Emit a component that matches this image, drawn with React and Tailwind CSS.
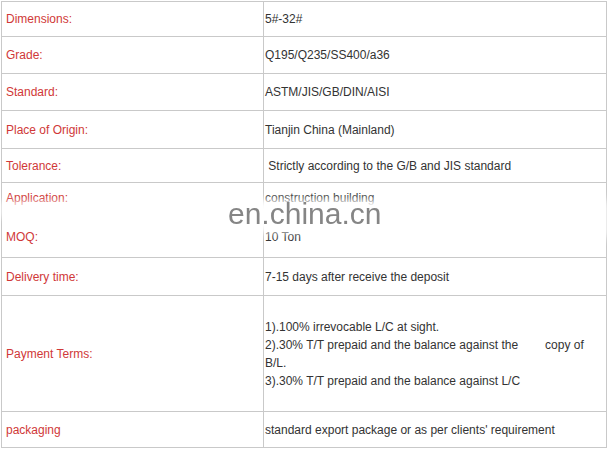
import React from 'react';

const rows = [
  { label: 'Dimensions:', value: '5#-32#', h: 'h-[35px]' },
  { label: 'Grade:', value: 'Q195/Q235/SS400/a36', h: 'h-[37px]' },
  { label: 'Standard:', value: 'ASTM/JIS/GB/DIN/AISI', h: 'h-[37px]' },
  { label: 'Place of Origin:', value: 'Tianjin China (Mainland)', h: 'h-[38px]' },
  { label: 'Tolerance:', value: '\u00a0Strictly according to the G/B and JIS standard', h: 'h-[34px]' },
];

function Row({ label, value, h, last }) {
  return (
    <div className={`grid grid-cols-[262px_1fr] ${h} ${last ? '' : 'border-b border-[#c9c9c9]'}`}>
      <div className="flex items-center border-r border-[#c9c9c9] pl-[4px] text-[#d03838]">{label}</div>
      <div className="flex items-center pl-[1px] text-[#333]">{value}</div>
    </div>
  );
}

export default function App() {
  return (
    <div
      className="relative w-[612px] h-[454px] bg-white pl-px pt-px text-[12px] leading-[18px]"
      style={{ fontFamily: '"Liberation Sans", Arial, sans-serif' }}
    >
      <div className="w-[606px] border border-[#c9c9c9]">
        {rows.map((r) => (
          <Row key={r.label} {...r} />
        ))}

        <div className="grid grid-cols-[262px_1fr] h-[75px] border-b border-[#c9c9c9]">
          <div className="flex flex-col gap-[21px] pt-[6px] border-r border-[#c9c9c9] pl-[4px] text-[#d03838]">
            <span>Application:</span>
            <span>MOQ:</span>
          </div>
          <div className="flex flex-col gap-[21px] pt-[6px] pl-[1px] text-[#333]">
            <span>construction building</span>
            <span>10 Ton</span>
          </div>
        </div>

        <Row label="Delivery time:" value="7-15 days after receive the deposit" h="h-[38px]" />

        <div className="grid grid-cols-[262px_1fr] h-[116px] border-b border-[#c9c9c9]">
          <div className="flex items-center border-r border-[#c9c9c9] pl-[4px] text-[#d03838]">Payment Terms:</div>
          <div className="flex flex-col justify-center pl-[1px] text-[#333]">
            <span>1).100% irrevocable L/C at sight.</span>
            <span>
              2).30% T/T prepaid and the balance against the<span className="ml-[27px]">copy of</span>
            </span>
            <span>B/L.</span>
            <span>3).30% T/T prepaid and the balance against L/C</span>
          </div>
        </div>

        <Row label="packaging" value="standard export package or as per clients' requirement" h="h-[35px]" last />
      </div>

      {/* watermark */}
      <div className="absolute left-[200px] top-[200px] w-[210px] h-[32px] bg-white blur-[4px]" />
      <div className="absolute left-[0px] top-[201px] w-[78px] h-[17px] bg-white/75 blur-[3px]" />
      <div className="absolute left-[592px] top-[200px] w-[20px] h-[38px] bg-white/70 blur-[4px]" />
      <div className="absolute left-[228px] top-[196px] text-[30px] leading-[36px] text-[#858585] blur-[0.4px]">
        en.china.cn
      </div>
    </div>
  );
}
